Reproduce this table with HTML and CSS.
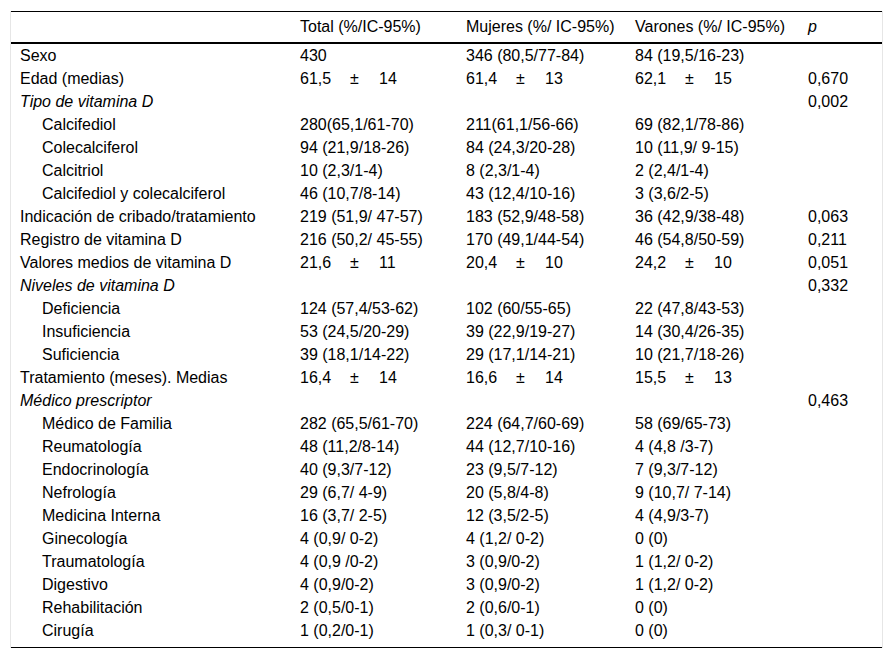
FILE: index.html
```html
<!DOCTYPE html>
<html lang="es">
<head>
<meta charset="utf-8">
<link rel="stylesheet" href="styles.css">
</head>
<body>
<div class="frame">
<table class="data">
<colgroup>
<col class="c1"><col class="c2"><col class="c3"><col class="c4"><col class="c5">
</colgroup>
<thead>
<tr><th></th><th>Total (%/IC-95%)</th><th>Mujeres (%/ IC-95%)</th><th>Varones (%/ IC-95%)</th><th><i>p</i></th></tr>
</thead>
<tbody>
<tr><td>Sexo</td><td>430</td><td>346 (80,5/77-84)</td><td>84 (19,5/16-23)</td><td></td></tr>
<tr><td>Edad (medias)</td><td><span class="m">61,5</span><span class="pm">±</span>14</td><td><span class="m">61,4</span><span class="pm">±</span>13</td><td><span class="m">62,1</span><span class="pm">±</span>15</td><td>0,670</td></tr>
<tr><td><i>Tipo de vitamina D</i></td><td></td><td></td><td></td><td>0,002</td></tr>
<tr><td class="sub">Calcifediol</td><td>280(65,1/61-70)</td><td>211(61,1/56-66)</td><td>69 (82,1/78-86)</td><td></td></tr>
<tr><td class="sub">Colecalciferol</td><td>94 (21,9/18-26)</td><td>84 (24,3/20-28)</td><td>10 (11,9/ 9-15)</td><td></td></tr>
<tr><td class="sub">Calcitriol</td><td>10 (2,3/1-4)</td><td>8 (2,3/1-4)</td><td>2 (2,4/1-4)</td><td></td></tr>
<tr><td class="sub">Calcifediol y colecalciferol</td><td>46 (10,7/8-14)</td><td>43 (12,4/10-16)</td><td>3 (3,6/2-5)</td><td></td></tr>
<tr><td>Indicación de cribado/tratamiento</td><td>219 (51,9/ 47-57)</td><td>183 (52,9/48-58)</td><td>36 (42,9/38-48)</td><td>0,063</td></tr>
<tr><td>Registro de vitamina D</td><td>216 (50,2/ 45-55)</td><td>170 (49,1/44-54)</td><td>46 (54,8/50-59)</td><td>0,211</td></tr>
<tr><td>Valores medios de vitamina D</td><td><span class="m">21,6</span><span class="pm">±</span>11</td><td><span class="m">20,4</span><span class="pm">±</span>10</td><td><span class="m">24,2</span><span class="pm">±</span>10</td><td>0,051</td></tr>
<tr><td><i>Niveles de vitamina D</i></td><td></td><td></td><td></td><td>0,332</td></tr>
<tr><td class="sub">Deficiencia</td><td>124 (57,4/53-62)</td><td>102 (60/55-65)</td><td>22 (47,8/43-53)</td><td></td></tr>
<tr><td class="sub">Insuficiencia</td><td>53 (24,5/20-29)</td><td>39 (22,9/19-27)</td><td>14 (30,4/26-35)</td><td></td></tr>
<tr><td class="sub">Suficiencia</td><td>39 (18,1/14-22)</td><td>29 (17,1/14-21)</td><td>10 (21,7/18-26)</td><td></td></tr>
<tr><td>Tratamiento (meses). Medias</td><td><span class="m">16,4</span><span class="pm">±</span>14</td><td><span class="m">16,6</span><span class="pm">±</span>14</td><td><span class="m">15,5</span><span class="pm">±</span>13</td><td></td></tr>
<tr><td><i>Médico prescriptor</i></td><td></td><td></td><td></td><td>0,463</td></tr>
<tr><td class="sub">Médico de Familia</td><td>282 (65,5/61-70)</td><td>224 (64,7/60-69)</td><td>58 (69/65-73)</td><td></td></tr>
<tr><td class="sub">Reumatología</td><td>48 (11,2/8-14)</td><td>44 (12,7/10-16)</td><td>4 (4,8 /3-7)</td><td></td></tr>
<tr><td class="sub">Endocrinología</td><td>40 (9,3/7-12)</td><td>23 (9,5/7-12)</td><td>7 (9,3/7-12)</td><td></td></tr>
<tr><td class="sub">Nefrología</td><td>29 (6,7/ 4-9)</td><td>20 (5,8/4-8)</td><td>9 (10,7/ 7-14)</td><td></td></tr>
<tr><td class="sub">Medicina Interna</td><td>16 (3,7/ 2-5)</td><td>12 (3,5/2-5)</td><td>4 (4,9/3-7)</td><td></td></tr>
<tr><td class="sub">Ginecología</td><td>4 (0,9/ 0-2)</td><td>4 (1,2/ 0-2)</td><td>0 (0)</td><td></td></tr>
<tr><td class="sub">Traumatología</td><td>4 (0,9 /0-2)</td><td>3 (0,9/0-2)</td><td>1 (1,2/ 0-2)</td><td></td></tr>
<tr><td class="sub">Digestivo</td><td>4 (0,9/0-2)</td><td>3 (0,9/0-2)</td><td>1 (1,2/ 0-2)</td><td></td></tr>
<tr><td class="sub">Rehabilitación</td><td>2 (0,5/0-1)</td><td>2 (0,6/0-1)</td><td>0 (0)</td><td></td></tr>
<tr class="last"><td class="sub">Cirugía</td><td>1 (0,2/0-1)</td><td>1 (0,3/ 0-1)</td><td>0 (0)</td><td></td></tr>
</tbody>
</table>
</div>
</body>
</html>
```
FILE: styles.css
```css
html, body {
  margin: 0;
  padding: 0;
  background: #fff;
}
body {
  font-family: "Liberation Sans", Arial, sans-serif;
  font-size: 16px;
  color: #000;
}
.frame {
  margin: 11px 0 0 10px;
  width: 871px;
  border-left: 1px solid #e6e6e6;
  border-right: 1px solid #e6e6e6;
}
.data {
  width: 871px;
  border-collapse: collapse;
  table-layout: fixed;
  border-top: 1px solid #000;
  border-bottom: 1px solid #000;
}
.c1 { width: 280px; }
.c2 { width: 166px; }
.c3 { width: 169px; }
.c4 { width: 173px; }
.c5 { width: 83px; }
.data th {
  font-weight: normal;
  text-align: left;
  height: 30px;
  padding: 0 0 0 9px;
  border-bottom: 2px solid #000;
  vertical-align: middle;
  white-space: nowrap;
}
.data td {
  height: 23px;
  padding: 0 0 0 9px;
  line-height: 23px;
  white-space: nowrap;
  vertical-align: middle;
}
.data td.sub {
  padding-left: 31px;
}
.data tr.last td {
  padding-bottom: 5px;
}
.m {
  display: inline-block;
  width: 50px;
}
.pm {
  display: inline-block;
  width: 29px;
}
```
